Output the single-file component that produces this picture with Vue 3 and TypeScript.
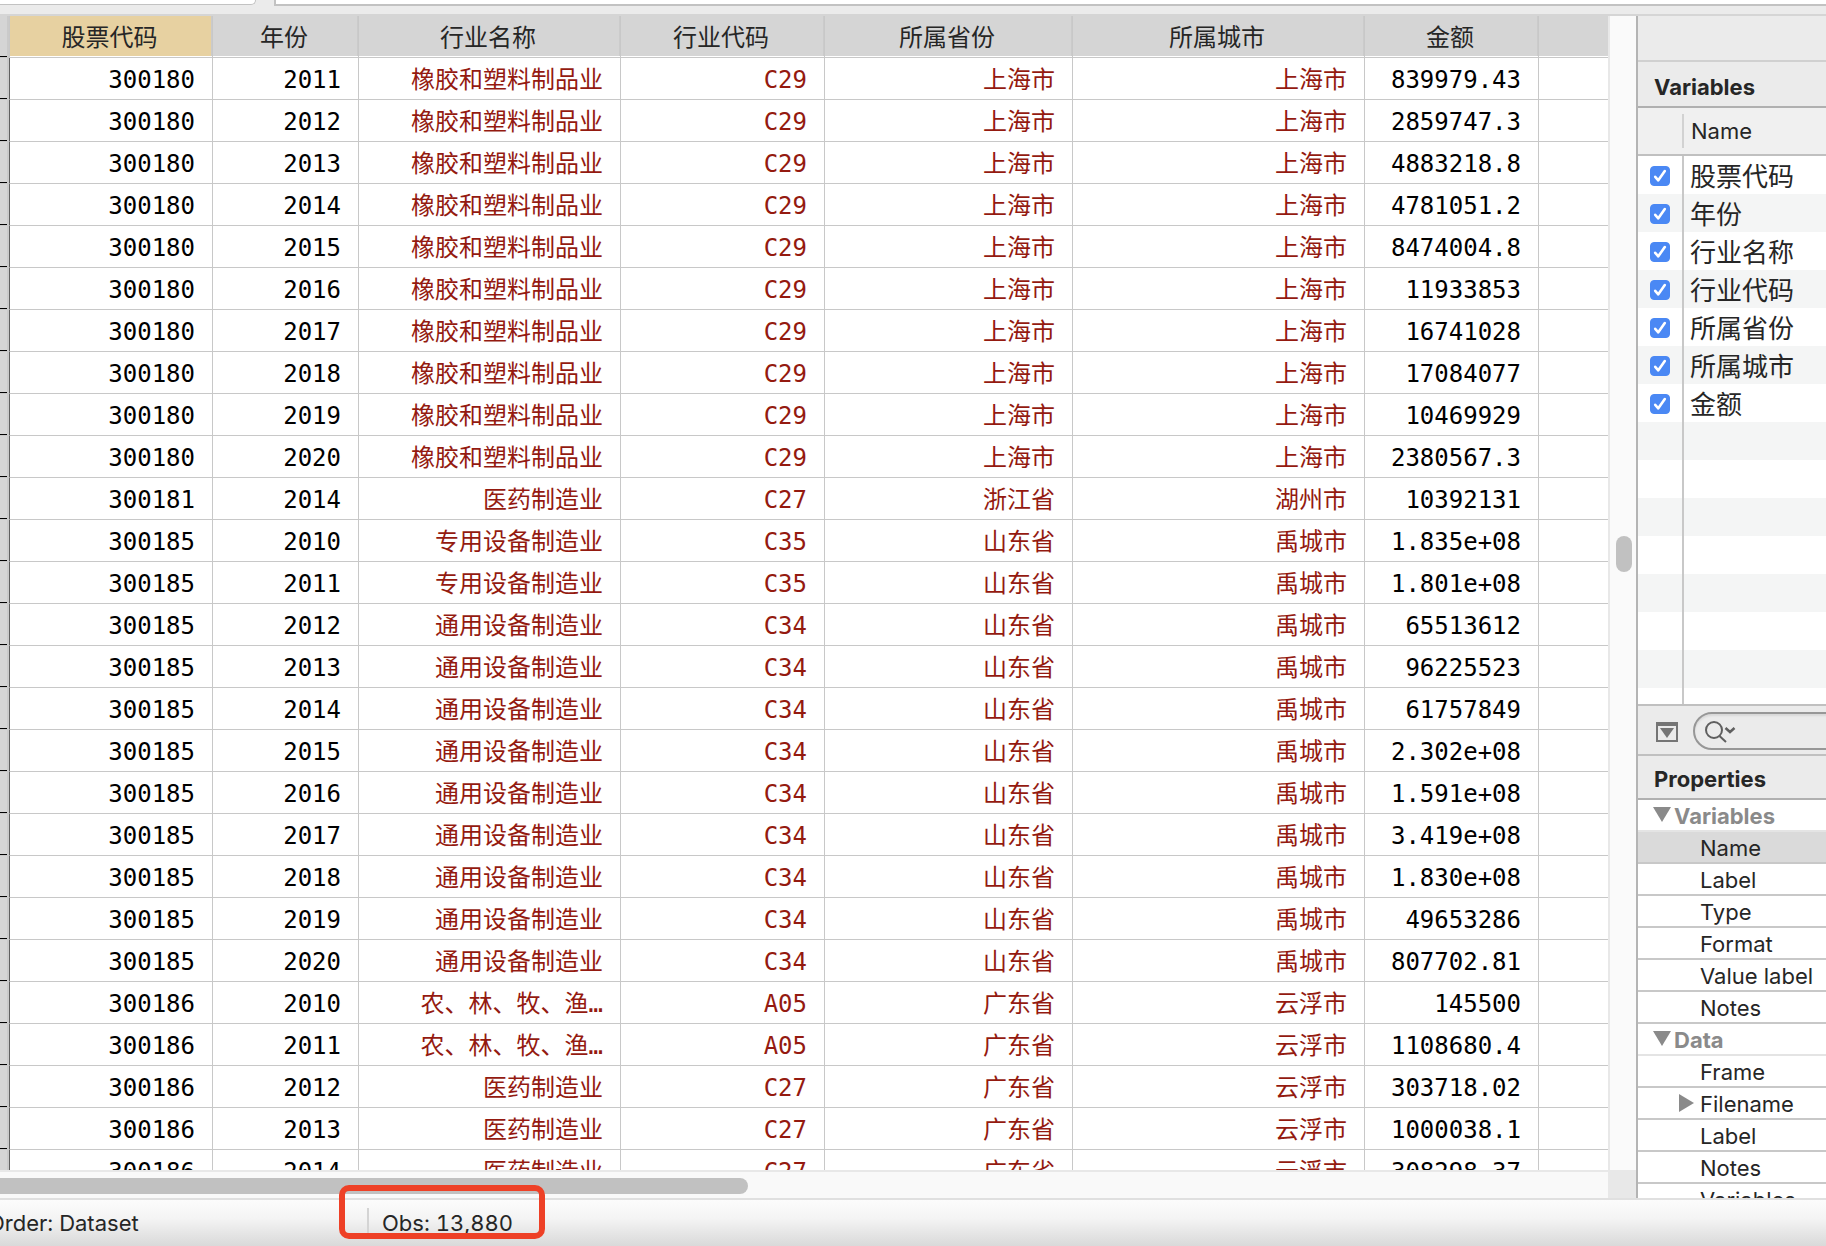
<script setup lang="ts">
import { ref } from 'vue'

interface Column {
  name: string
  width?: number
  text?: boolean
}

const columns: Column[] = [
  { name: '股票代码', width: 203 },
  { name: '年份', width: 146 },
  { name: '行业名称', width: 262, text: true },
  { name: '行业代码', width: 204, text: true },
  { name: '所属省份', width: 248, text: true },
  { name: '所属城市', width: 292, text: true },
  { name: '金额', width: 174 },
]

const rubber = ['橡胶和塑料制品业', 'C29', '上海市', '上海市']
const pharma = ['医药制造业', 'C27']
const special = ['专用设备制造业', 'C35', '山东省', '禹城市']
const general = ['通用设备制造业', 'C34', '山东省', '禹城市']
const farming = ['农、林、牧、渔…', 'A05', '广东省', '云浮市']
const yunfu = ['广东省', '云浮市']

const rows: string[][] = [
  ['300180', '2011', ...rubber, '839979.43'],
  ['300180', '2012', ...rubber, '2859747.3'],
  ['300180', '2013', ...rubber, '4883218.8'],
  ['300180', '2014', ...rubber, '4781051.2'],
  ['300180', '2015', ...rubber, '8474004.8'],
  ['300180', '2016', ...rubber, '11933853'],
  ['300180', '2017', ...rubber, '16741028'],
  ['300180', '2018', ...rubber, '17084077'],
  ['300180', '2019', ...rubber, '10469929'],
  ['300180', '2020', ...rubber, '2380567.3'],
  ['300181', '2014', ...pharma, '浙江省', '湖州市', '10392131'],
  ['300185', '2010', ...special, '1.835e+08'],
  ['300185', '2011', ...special, '1.801e+08'],
  ['300185', '2012', ...general, '65513612'],
  ['300185', '2013', ...general, '96225523'],
  ['300185', '2014', ...general, '61757849'],
  ['300185', '2015', ...general, '2.302e+08'],
  ['300185', '2016', ...general, '1.591e+08'],
  ['300185', '2017', ...general, '3.419e+08'],
  ['300185', '2018', ...general, '1.830e+08'],
  ['300185', '2019', ...general, '49653286'],
  ['300185', '2020', ...general, '807702.81'],
  ['300186', '2010', ...farming, '145500'],
  ['300186', '2011', ...farming, '1108680.4'],
  ['300186', '2012', ...pharma, ...yunfu, '303718.02'],
  ['300186', '2013', ...pharma, ...yunfu, '1000038.1'],
  ['300186', '2014', ...pharma, ...yunfu, '308298.37'],
]

const variables = ref(columns.map((c) => ({ name: c.name, shown: true })))

const groups = [
  { title: 'Variables', items: ['Name', 'Label', 'Type', 'Format', 'Value label', 'Notes'] },
  { title: 'Data', items: ['Frame', 'Filename', 'Label', 'Notes', 'Variables'] },
]

const query = ref('')
</script>

<template>
  <div class="window">
    <div class="toolbar">
      <div class="field cell-ref"></div>
      <div class="field cell-value"></div>
    </div>

    <div class="body">
      <main class="data">
        <div class="viewport">
          <table class="grid">
            <colgroup>
              <col class="gutter-col" />
              <col v-for="c in columns" :key="c.name" :style="{ width: c.width + 'px' }" />
              <col />
            </colgroup>
            <thead>
              <tr>
                <th class="gutter"></th>
                <th v-for="(c, i) in columns" :key="c.name" scope="col" :class="{ active: i === 0 }">{{ c.name }}</th>
                <th class="rest"></th>
              </tr>
            </thead>
            <tbody>
              <tr v-for="(row, r) in rows" :key="r">
                <td class="gutter"></td>
                <td v-for="(value, i) in row" :key="i" :class="{ string: columns[i].text }">{{ value }}</td>
                <td class="rest"></td>
              </tr>
            </tbody>
          </table>
        </div>
        <div class="vscroll"><div class="vthumb"></div></div>
        <div class="hscroll"><div class="hthumb"></div></div>
        <div class="corner"></div>
      </main>

      <aside class="side">
        <div class="blank"></div>
        <h2 class="title">Variables</h2>
        <div class="list-head"><span>Name</span></div>
        <ul class="vars">
          <li v-for="v in variables" :key="v.name">
            <label>
              <input v-model="v.shown" type="checkbox" />
              <span>{{ v.name }}</span>
            </label>
          </li>
        </ul>
        <div class="filter">
          <button type="button" class="menu" aria-label="Variable list options">
            <svg width="22" height="20" viewBox="0 0 22 20">
              <path d="M0 0H22V20H0ZM2 4V18H20V4Z" fill="#757575" fill-rule="evenodd" />
              <path d="M4 6H18L11 16Z" fill="#757575" />
            </svg>
          </button>
          <label class="search">
            <svg width="32" height="24" viewBox="0 0 32 24" fill="none" stroke="#5f5f5f" stroke-width="2">
              <circle cx="9" cy="11" r="8" />
              <path d="M14.500 17L21 23" />
              <path d="M20.500 9L25 13L29.500 9" stroke-width="2.500" />
            </svg>
            <input v-model="query" type="text" aria-label="Filter variables" />
          </label>
        </div>
        <h2 class="title props-title">Properties</h2>
        <div class="props">
          <section v-for="g in groups" :key="g.title">
            <button type="button" class="group">
              <svg width="18" height="16" viewBox="0 0 18 16"><path d="M0 0H18L9 15Z" fill="#8a8a8a" /></svg>
              <span>{{ g.title }}</span>
            </button>
            <ul>
              <li v-for="item in g.items" :key="item" :class="{ selected: item === 'Name' }">
                <svg v-if="item === 'Filename'" width="15" height="18" viewBox="0 0 15 18">
                  <path d="M0 0L15 9L0 18Z" fill="#8a8a8a" />
                </svg>
                <span>{{ item }}</span>
              </li>
            </ul>
          </section>
        </div>
      </aside>
    </div>

    <footer class="status">
      <span class="order">Order: Dataset</span>
      <span class="obs">Obs: 13,880<i class="marker"></i></span>
    </footer>
  </div>
</template>

<style>
body {
  margin: 0;
}
</style>

<style scoped>
.window,
.window * {
  box-sizing: border-box;
}
.window {
  display: flex;
  flex-direction: column;
  height: 100vh;
  overflow: hidden;
  background: #ebebeb;
  color: #262626;
  font: 22px/30px Inter, "Noto Sans CJK SC", sans-serif;
}
ul {
  list-style: none;
  margin: 0;
  padding: 0;
}
button {
  border: 0;
  padding: 0;
  background: none;
  font: inherit;
}

.toolbar {
  display: flex;
  gap: 18px;
  height: 16px;
  flex: none;
  border-bottom: 2px solid #d5d5d5;
}
.field {
  height: 6px;
  background: #fff;
  border: 0 solid #c2c2c2;
}
.cell-ref {
  width: 256px;
  height: 5px;
  border-width: 0 1px 1px 0;
  border-bottom-right-radius: 6px;
}
.cell-value {
  flex: 1;
  border-width: 0 0 2px 2px;
}

.body {
  display: flex;
  flex: 1;
  min-height: 0;
}
.data {
  flex: 1;
  min-width: 0;
  display: grid;
  grid-template-columns: minmax(0, 1fr) 28px;
  grid-template-rows: minmax(0, 1fr) 28px;
}
.viewport {
  overflow: hidden;
  background: #fff;
}
.grid {
  width: 100%;
  table-layout: fixed;
  border-collapse: separate;
  border-spacing: 0;
  font: 24px/30px "DejaVu Sans Mono", "Noto Sans CJK SC", monospace;
}
.gutter-col {
  width: 10px;
}
.grid th,
.grid td {
  height: 42px;
  padding: 2px 17px 0 0;
  border: 0 solid #c8c8c8;
  border-width: 0 1px 1px 0;
  white-space: nowrap;
}
.grid th {
  padding: 2px 3px 0 0;
  background: #d5d5d5;
  box-shadow: inset 0 -1px #fff, inset -1px 0 #cbcbcb;
  color: #262626;
  font-weight: 400;
  text-align: center;
}
.grid th.active {
  background: #e7d1a1;
}
.grid td {
  color: #000;
  text-align: right;
}
.grid td.string {
  color: #941a10;
}
.grid th.rest,
.grid td.rest {
  border-right: 0;
}
.grid th.rest {
  box-shadow: inset 0 -1px #fff;
}
.grid .gutter {
  padding: 0;
  background: linear-gradient(#000, #000) 0 100% / 7px 1px no-repeat, linear-gradient(90deg, #d5d5d5 7px, #cacaca 7px);
}
.grid th.gutter {
  box-shadow: none;
}
.grid td.gutter {
  border-right-color: #606060;
}

.vscroll {
  display: flex;
  flex-direction: column;
  align-items: center;
  padding-left: 1px;
  border-left: 2px solid #e8e8e8;
  background: #fafafa;
}
.vscroll::before {
  content: "";
  flex: 520;
}
.vscroll::after {
  content: "";
  flex: 598;
}
.vthumb {
  width: 16px;
  height: 36px;
  border-radius: 8px;
  background: #c1c1c1;
}
.hscroll {
  padding-top: 6px;
  border-top: 2px solid #e8e8e8;
  background: #f9f9f9;
}
.hthumb {
  width: 46.5%;
  height: 16px;
  border-radius: 0 8px 8px 0;
  background: #c1c1c1;
}
.corner {
  background: #e8e8e8;
}

.side {
  display: flex;
  flex-direction: column;
  flex: 0 0 190px;
  overflow: hidden;
  border-left: 2px solid #b4b4b4;
}
.blank {
  flex: 0 0 46px;
  border-bottom: 2px solid #d0d0d0;
}
.title {
  flex: 0 0 46px;
  margin: 0;
  padding: 9px 0 0 16px;
  border-bottom: 2px solid #b0b0b0;
  font-size: 22px;
  line-height: 32px;
  font-weight: 700;
}
.list-head {
  flex: 0 0 48px;
  padding: 6px 0 6px 44px;
  border-bottom: 2px solid #c0c0c0;
  background: #f0f0f0;
}
.list-head span {
  display: block;
  padding-left: 7px;
  border-left: 2px solid #d2d2d2;
  line-height: 34px;
}
.vars {
  flex: 1;
  min-height: 0;
  overflow: hidden;
  background:
    linear-gradient(#c8c8c8, #c8c8c8) 44px 0 / 2px 100% no-repeat,
    repeating-linear-gradient(#fff 0 38px, #f4f5f5 38px 76px);
}
.vars label {
  display: flex;
  align-items: center;
  gap: 20px;
  height: 38px;
  padding-left: 12px;
  font: 26px/38px "Noto Sans CJK SC", sans-serif;
  white-space: nowrap;
}
.vars input {
  appearance: none;
  flex: none;
  width: 20px;
  height: 20px;
  margin: 2px 0 0;
  border: 1px solid #b0b0b0;
  border-radius: 4px;
  background: #fff;
}
.vars input:checked {
  border-color: #4a88f4;
  background: #4a88f4 url("data:image/svg+xml,%3Csvg xmlns='http://www.w3.org/2000/svg' viewBox='0 0 18 18'%3E%3Cpath d='M4.200 9.800L7.300 13.300L13.800 4' fill='none' stroke='white' stroke-width='2.600' stroke-linecap='round' stroke-linejoin='round'/%3E%3C/svg%3E");
}
.filter {
  display: flex;
  align-items: center;
  gap: 15px;
  flex: 0 0 52px;
  padding-left: 18px;
  border: solid #c0c0c0;
  border-width: 2px 0;
}
.menu {
  display: flex;
  padding-top: 4px;
}
.search {
  display: flex;
  align-items: center;
  flex: 1;
  min-width: 0;
  height: 38px;
  margin: 2px -24px 0 0;
  padding-left: 10px;
  border: 2px solid #979797;
  border-radius: 19px;
  box-shadow: inset 0 2px 2px #d8d8d8;
}
.search svg {
  flex: none;
}
.search input {
  flex: 1;
  min-width: 0;
  border: 0;
  outline: 0;
  background: none;
  font: inherit;
}
.props-title {
  flex-basis: 44px;
  padding-top: 7px;
}
.props {
  flex: 0 0 398px;
  overflow: hidden;
  background: #fff;
}
.group {
  display: flex;
  align-items: center;
  gap: 3px;
  width: 100%;
  height: 32px;
  padding-left: 15px;
  border-bottom: 2px solid #e4e4e4;
  color: #8a8a8a;
  font-weight: 700;
}
.group span {
  padding-top: 2px;
}
.props li {
  display: flex;
  align-items: center;
  height: 32px;
  padding-left: 41px;
  border-bottom: 2px solid #c8c8c8;
  white-space: nowrap;
}
.props li span {
  padding: 2px 0 0 21px;
}
.props li svg + span {
  padding-left: 6px;
}
.props li.selected {
  background: #dadada;
}

.status {
  display: flex;
  align-items: center;
  flex: 0 0 48px;
  border-top: 2px solid #e0e0e0;
  background: linear-gradient(#fcfcfc, #f4f4f4 40%, #d9d9d9);
  font-variant-numeric: tabular-nums;
}
.order {
  width: 379px;
  margin-left: -12px;
}
.obs {
  position: relative;
  padding-left: 13px;
  border-left: 2px solid #d4d4d4;
}
.marker {
  position: absolute;
  top: -23px;
  left: -30px;
  right: -32px;
  height: 54px;
  border: 6px solid #ee4026;
  border-radius: 10px;
}
</style>
